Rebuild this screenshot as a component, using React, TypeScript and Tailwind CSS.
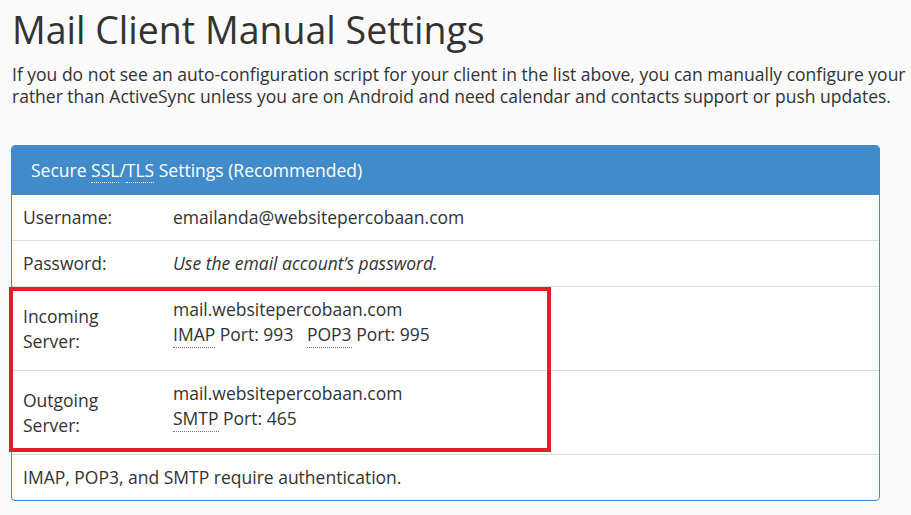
import React from "react";

const Abbr = ({ children }: { children: React.ReactNode }) => (
  <span className="border-b border-dotted border-[#777] pb-[1px] leading-[1]">{children}</span>
);

export default function App() {
  return (
    <div className="min-h-[515px] w-[911px] overflow-hidden bg-[#fafafa] text-[#333] font-['Open_Sans',sans-serif]">
      <div className="pl-[12px]">
        <h1 className="pt-[8px] text-[37.5px] leading-[44px] font-normal whitespace-nowrap">Mail Client Manual Settings</h1>
        <p className="mt-[11px] text-[17.5px] leading-[22px] whitespace-nowrap">
          If you do not see an auto-configuration script for your client in the list above, you can manually configure your mail client using the settings below.
          <br />
          rather than ActiveSync unless you are on Android and need calendar and contacts support or push updates.
        </p>
      </div>
      <div className="relative ml-[11px] mt-[38px] w-[869px] rounded-[4px] border border-[#428bca] bg-white text-[17.5px] leading-[25px]">
        <div className="h-[49px] rounded-t-[3px] bg-[#428bca] pl-[19px] pt-[12px] text-white">
          Secure <span className="border-b border-dotted border-white">SSL</span>/<span className="border-b border-dotted border-white">TLS</span> Settings (Recommended)
        </div>
        <div className="flex h-[46px] items-center border-b border-[#ddd] pl-[11px]">
          <div className="w-[150px]">Username:</div>
          <div>emailanda@websitepercobaan.com</div>
        </div>
        <div className="flex h-[46px] items-center border-b border-[#ddd] pl-[11px]">
          <div className="w-[150px]">Password:</div>
          <div className="italic">Use the email account’s password.</div>
        </div>
        <div className="flex h-[84px] border-b border-[#ddd] pl-[11px]">
          <div className="flex w-[150px] items-center">Incoming<br />Server:</div>
          <div className="pt-[10px]">
            <div>mail.websitepercobaan.com</div>
            <div>
              <Abbr>IMAP</Abbr> Port: 993 <span className="ml-[9px]"><Abbr>POP3</Abbr></span> Port: 995
            </div>
          </div>
        </div>
        <div className="flex h-[84px] border-b border-[#ddd] pl-[11px]">
          <div className="flex w-[150px] items-center">Outgoing<br />Server:</div>
          <div className="pt-[10px]">
            <div>mail.websitepercobaan.com</div>
            <div>
              <Abbr>SMTP</Abbr> Port: 465
            </div>
          </div>
        </div>
        <div className="flex h-[45px] items-center pl-[11px]">
          IMAP, POP3, and SMTP require authentication.
        </div>
        <div className="pointer-events-none absolute left-[-3px] top-[141px] h-[165px] w-[542px] border-[4px] border-[#e41e26]" />
      </div>
    </div>
  );
}
